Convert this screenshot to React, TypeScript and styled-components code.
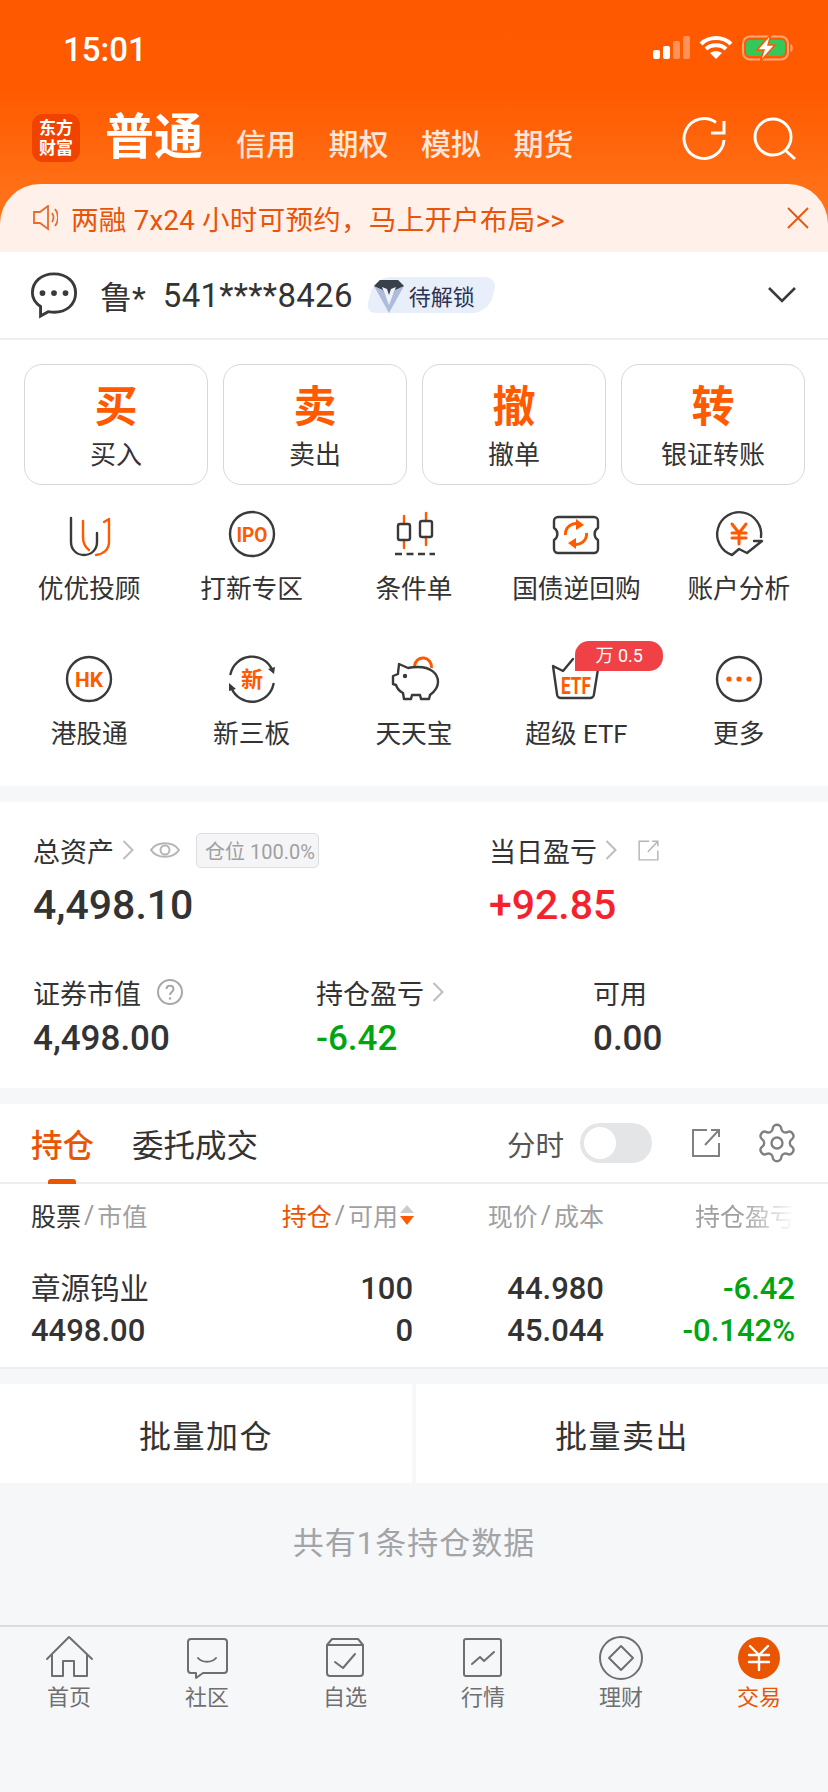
import React from "react";
import styled, { createGlobalStyle } from "styled-components";
import { Settings } from "lucide-react";

const ORANGE = "#ff5a00";
const DARK = "#333333";
const GRAY_LINE = "#eeeeee";
const PAGE_BG = "#f6f7f9";
const GREEN = "#00a510";

const GlobalStyle = createGlobalStyle`
  html, body {
    margin: 0;
    padding: 0;
    background: ${PAGE_BG};
  }
  body, button {
    font-family: Roboto, "Noto Sans CJK SC", sans-serif;
    color: ${DARK};
  }
`;

const Page = styled.div`
  width: 828px;
  height: 1792px;
  overflow: hidden;
  display: flex;
  flex-direction: column;
  background: ${PAGE_BG};
`;

/* header */
const Header = styled.header`
  height: 252px;
  display: flex;
  flex-direction: column;
  background: linear-gradient(180deg, #ff5900 0, #ff5a00 90px, #ff7a22 240px);
`;
const StatusBar = styled.div`
  height: 98px;
  display: flex;
  align-items: center;
  padding-left: 63px;
  padding-right: 34px;
`;
const Time = styled.div`
  flex: 1;
  color: #fff;
  font-size: 33px;
  font-weight: 500;
`;
const NavRow = styled.div`
  height: 86px;
  display: flex;
  align-items: flex-start;
  padding: 16px 32px 0;
  box-sizing: border-box;
`;
const Logo = styled.div`
  width: 48px;
  height: 48px;
  border-radius: 11px;
  background: #f04300;
  color: #fff;
  font-size: 17px;
  font-weight: 700;
  line-height: 20px;
  display: flex;
  align-items: center;
  justify-content: center;
  text-align: center;
  margin-right: 25px;
`;
const NavActive = styled.div`
  color: #fff;
  font-size: 49px;
  font-weight: 700;
  line-height: 48px;
  margin-right: 33px;
`;
const NavItem = styled.div`
  color: #ffe6d8;
  font-size: 30px;
  font-weight: 500;
  line-height: 30px;
  margin-top: 16px;
  margin-right: 32.5px;
`;
const NavIcons = styled.div`
  margin-left: auto;
  display: flex;
  gap: 20px;
  margin-right: -6px;
  margin-top: 2px;
`;
const Notice = styled.div`
  height: 68px;
  display: flex;
  align-items: center;
  background: #fff1ea;
  border-radius: 40px 40px 0 0;
  padding: 0 19px 0 32px;
  color: #e8540a;
  font-size: 27.5px;
`;
const NoticeText = styled.span`
  flex: 1;
  margin-left: 13px;
  letter-spacing: 0.3px;
`;

/* account row */
const AccountRow = styled.div`
  height: 88px;
  box-sizing: border-box;
  background: #fff;
  border-bottom: 2px solid ${GRAY_LINE};
  display: flex;
  align-items: center;
  padding: 0 32px 0 30px;
`;
const AccountName = styled.span`
  font-size: 32px;
  margin-left: 22px;
`;
const AccountNo = styled.span`
  font-size: 33px;
  margin-left: 17px;
  letter-spacing: 0.3px;
`;
const VipBadge = styled.div`
  position: relative;
  width: 132px;
  height: 36px;
  margin-left: 13px;
  margin-right: auto;
  display: flex;
  align-items: center;
  padding-left: 7px;
  box-sizing: border-box;
  &::before {
    content: "";
    position: absolute;
    inset: 0 5px 0 4px;
    background: #e8eefa;
    border-radius: 16px 12px 16px 10px;
    transform: skewX(-14deg);
  }
`;
const VipText = styled.span`
  position: relative;
  font-size: 22px;
  color: #2a3350;
  margin-left: 4px;
`;

/* trade buttons and shortcuts */
const TradePanel = styled.section`
  background: #fff;
  padding: 24px 24px 37px 24px;
`;
const TradeGrid = styled.div`
  display: grid;
  grid-template-columns: repeat(4, 184px);
  gap: 15px;
`;
const TradeButton = styled.div`
  height: 121px;
  box-sizing: border-box;
  border: 1.5px solid #d8d8d8;
  border-radius: 18px;
  padding-top: 6px;
  display: flex;
  flex-direction: column;
  align-items: center;
  justify-content: center;
`;
const TradeChar = styled.div`
  color: ${ORANGE};
  font-size: 43px;
  font-weight: 700;
  line-height: 50px;
`;
const TradeLabel = styled.div`
  font-size: 26px;
  line-height: 36px;
  margin-top: 5px;
`;
const ShortcutGrid = styled.div`
  display: grid;
  grid-template-columns: repeat(5, 162.4px);
  row-gap: 45px;
  margin: 19px -16px 0;
`;
const Shortcut = styled.div`
  position: relative;
  height: 100px;
  display: flex;
  flex-direction: column;
  align-items: center;
`;
const ShortcutLabel = styled.div`
  font-size: 25.7px;
  line-height: 30px;
  margin-top: 10px;
  white-space: nowrap;
`;
const RateBadge = styled.div`
  position: absolute;
  left: 80px;
  top: -8px;
  width: 88px;
  height: 30px;
  border-radius: 14px 14px 14px 0;
  background: #ef4146;
  color: #fff;
  font-size: 18px;
  line-height: 30px;
  text-align: center;
`;
const IconGlyph = styled.text<{ $size: number }>`
  fill: ${ORANGE};
  font-size: ${(p) => p.$size}px;
  font-weight: 700;
  font-family: Roboto, "Noto Sans CJK SC", sans-serif;
  text-anchor: middle;
`;

/* assets */
const AssetPanel = styled.section`
  margin-top: 16px;
  background: #fff;
  padding: 30px 33px 29px;
`;
const AssetTop = styled.div`
  display: grid;
  grid-template-columns: 456px 1fr;
`;
const AssetBottom = styled.div`
  display: grid;
  grid-template-columns: 283px 277px 1fr;
  margin-top: 44px;
`;
const AssetLabel = styled.div`
  height: 36px;
  display: flex;
  align-items: center;
  font-size: 27px;
  white-space: nowrap;
`;
const Ratio = styled.div`
  height: 35px;
  margin-left: 16px;
  padding: 0 3px 0 8px;
  display: flex;
  align-items: center;
  box-sizing: border-box;
  border: 1px solid #dddddd;
  border-radius: 5px;
  background: #f5f5f7;
  color: #a0a0a0;
  font-size: 20px;
`;
const BigValue = styled.div<{ $color?: string }>`
  color: ${(p) => p.$color || DARK};
  font-size: 41px;
  font-weight: 500;
  line-height: 50px;
  margin-top: 12px;
`;
const SmallValue = styled.div<{ $color?: string }>`
  color: ${(p) => p.$color || DARK};
  font-size: 35px;
  font-weight: 500;
  line-height: 40px;
  margin-top: 9px;
`;

/* holdings */
const TabRow = styled.div`
  margin-top: 16px;
  height: 80px;
  box-sizing: border-box;
  background: #fff;
  border-bottom: 2px solid ${GRAY_LINE};
  display: flex;
  align-items: center;
  padding: 0 29px 0 31px;
`;
const Tab = styled.div<{ $active?: boolean }>`
  position: relative;
  align-self: stretch;
  display: flex;
  align-items: center;
  margin-right: 38px;
  font-size: 31.5px;
  color: ${(p) => (p.$active ? "#ea5504" : DARK)};
  font-weight: ${(p) => (p.$active ? 500 : 400)};
  ${(p) =>
    p.$active &&
    `&::after {
      content: "";
      position: absolute;
      left: 17px;
      bottom: -2px;
      width: 28px;
      height: 5px;
      border-radius: 3px 3px 0 0;
      background: #ea5504;
    }`}
`;
const TabTools = styled.div`
  margin-left: auto;
  display: flex;
  align-items: center;
`;
const ToolLabel = styled.span`
  font-size: 28.5px;
  color: #555;
`;
const Toggle = styled.div`
  width: 72px;
  height: 40px;
  margin: 0 38px 0 16px;
  border-radius: 20px;
  background: #e4e5e7;
  padding: 4px;
  box-sizing: border-box;
  &::before {
    content: "";
    display: block;
    width: 32px;
    height: 32px;
    border-radius: 50%;
    background: #fff;
  }
`;
const GearIcon = styled(Settings)`
  width: 44px;
  height: 44px;
  margin-left: 33px;
  color: #808080;
  stroke-width: 1.3;
`;
const TableGrid = styled.div`
  display: grid;
  grid-template-columns: 160px 222px 191px 191px;
  padding: 0 33px 0 31px;
  background: #fff;
`;
const HeadRow = styled(TableGrid)`
  height: 66px;
  box-sizing: border-box;
  padding-bottom: 4px;
  align-items: center;
  font-size: 25px;
  color: #a0a0a0;
`;
const BodyRow = styled(TableGrid)`
  padding-top: 18px;
  padding-bottom: 15px;
  border-bottom: 2px solid ${GRAY_LINE};
  font-size: 31px;
  line-height: 42px;
`;
const HeadCell = styled.div<{ $fade?: boolean }>`
  display: flex;
  justify-content: flex-end;
  align-items: center;
  white-space: nowrap;
  ${(p) =>
    p.$fade &&
    `-webkit-mask-image: linear-gradient(90deg, #000 72%, transparent 100%);
     mask-image: linear-gradient(90deg, #000 72%, transparent 100%);`}
`;
const HeadFirst = styled(HeadCell)`
  justify-content: flex-start;
`;
const HeadStrong = styled.span<{ $orange?: boolean }>`
  color: ${(p) => (p.$orange ? "#ea5504" : "inherit")};
`;
const HeadDark = styled.span`
  color: ${DARK};
`;
const Slash = styled.span`
  margin: 0 3px;
  color: #999;
`;
const SortIcon = styled.svg`
  width: 16px;
  height: 24px;
  margin-left: 1px;
  margin-right: -2px;
`;
const Cell = styled.div`
  text-align: right;
  font-weight: 500;
`;
const NameCell = styled.div`
  font-weight: 400;
`;
const NameText = styled.div`
  font-size: 29.5px;
  white-space: nowrap;
`;
const NameNumber = styled.div`
  font-weight: 500;
`;
const Line = styled.div<{ $color?: string }>`
  color: ${(p) => p.$color || DARK};
  white-space: nowrap;
`;
const BatchRow = styled.div`
  margin-top: 15px;
  display: flex;
  gap: 4px;
`;
const BatchButton = styled.div`
  flex: 1;
  height: 99px;
  background: #fff;
  display: flex;
  align-items: center;
  justify-content: center;
  font-size: 32px;
  letter-spacing: 1.5px;
`;
const Summary = styled.div`
  height: 142px;
  box-sizing: border-box;
  padding-top: 41px;
  text-align: center;
  color: #a2a4a8;
  font-size: 31px;
  line-height: 40px;
  letter-spacing: 1px;
`;

/* bottom bar */
const BottomBar = styled.nav`
  flex: 1;
  border-top: 2px solid #dcdcdc;
  display: grid;
  grid-template-columns: repeat(6, 138px);
  padding-top: 7px;
  align-items: start;
`;
const BarItem = styled.div<{ $active?: boolean }>`
  display: flex;
  flex-direction: column;
  align-items: center;
  font-size: 22px;
  line-height: 26px;
  color: ${(p) => (p.$active ? "#ea5504" : "#6f6f72")};
`;
const BarIcon = styled.svg`
  width: 50px;
  height: 48px;
  margin-bottom: 3px;
  fill: none;
  stroke: #6f6f72;
  stroke-width: 2;
  stroke-linejoin: round;
  stroke-linecap: round;
`;
const StatusIcon = styled.svg`
  display: block;
  overflow: visible;
`;
const LineIcon = styled.svg<{ $size: number }>`
  display: block;
  flex: none;
  width: ${(p) => p.$size}px;
  height: ${(p) => p.$size}px;
  fill: none;
`;
const Shortcut60 = styled.svg`
  display: block;
  width: 60px;
  height: 60px;
  fill: none;
  overflow: visible;
  stroke-width: 2.4;
  stroke-linecap: round;
  stroke-linejoin: round;
`;
const Chevron = styled.svg`
  width: 12px;
  height: 22px;
  margin-left: 8px;
  fill: none;
  stroke: #bdbdbd;
  stroke-width: 2;
`;

const INK = "#3a3a3a";

const SmallChevron = () => (
  <Chevron viewBox="0 0 12 22">
    <path d="M1.5 2 L10.5 11 L1.5 20" />
  </Chevron>
);

const ShareIcon = ({ size, color, ml }: { size: number; color: string; ml: number }) => (
  <LineIcon $size={size} viewBox="0 0 32 32" style={{ marginLeft: ml }} stroke={color} strokeWidth={2}>
    <path d="M17 3 H3 V29 H29 V16" />
    <path d="M15 18 L29 3 M21 3 H29 V10" />
  </LineIcon>
);

const shortcuts: { label: string; icon: React.ReactNode; badge?: string }[] = [
  {
    label: "优优投顾",
    icon: (
      <>
        <path stroke={INK} d="M12 14 V38 C12 46 18 51 25 51 C32 51 38 46 38 38 V29" />
        <path stroke={ORANGE} d="M24 17 V33 C24 39 26 43 30 46" />
        <path stroke={ORANGE} d="M37 51 C45 50 50 45 50 38 V15 L45 18" />
      </>
    ),
  },
  {
    label: "打新专区",
    icon: (
      <>
        <circle cx="30" cy="30" r="22" stroke={INK} />
        <IconGlyph $size={21} x="30" y="37.5" textLength="31" lengthAdjust="spacingAndGlyphs">
          IPO
        </IconGlyph>
      </>
    ),
  },
  {
    label: "条件单",
    icon: (
      <>
        <path stroke={ORANGE} d="M20 12 V20 M20 36 V44 M42 9 V17 M42 33 V41" />
        <rect x="14" y="20" width="12" height="16" rx="2" stroke={INK} />
        <rect x="36" y="17" width="12" height="16" rx="2" stroke={INK} />
        <path stroke={INK} d="M11 50 H51" strokeDasharray="7 4.5" strokeLinecap="butt" />
      </>
    ),
  },
  {
    label: "国债逆回购",
    icon: (
      <>
        <path
          stroke={INK}
          d="M12 13 H48 A4 4 0 0 1 52 17 V24 A7 7 0 0 0 52 36 V45 A4 4 0 0 1 48 49 H12 A4 4 0 0 1 8 45 V36 A7 7 0 0 0 8 24 V17 A4 4 0 0 1 12 13 Z"
        />
        <path stroke={ORANGE} strokeWidth={3} strokeLinecap="butt" d="M19.5 31 A10.5 10.5 0 0 1 33 20" />
        <path stroke={ORANGE} strokeWidth={3} strokeLinecap="butt" d="M40.5 29 A10.5 10.5 0 0 1 27 40" />
        <path fill={ORANGE} d="M30 15 L38 21 L30 26 Z M30 45 L22 39 L30 34 Z" />
      </>
    ),
  },
  {
    label: "账户分析",
    icon: (
      <>
        <path stroke={INK} d="M52 33 A22 22 0 1 0 23 51 L30 45 L38 49 L53 37 H45" />
        <path stroke={ORANGE} strokeWidth={3} d="M23 20 L30 29 L37 20 M30 29 V40 M23 29 H37 M23 34 H37" />
      </>
    ),
  },
  {
    label: "港股通",
    icon: (
      <>
        <circle cx="30" cy="30" r="22" stroke={INK} />
        <IconGlyph $size={21} x="30" y="37.5" textLength="28" lengthAdjust="spacingAndGlyphs">
          HK
        </IconGlyph>
      </>
    ),
  },
  {
    label: "新三板",
    icon: (
      <>
        <path stroke={INK} d="M8.5 25 A22 22 0 0 1 50 20.5 M51.5 35 A22 22 0 0 1 9.5 39" />
        <path fill={INK} d="M46 20 L53 18 L52 25 Z M14 40 L7 42 L7 34 Z" />
        <IconGlyph $size={22} x="30" y="38">
          新
        </IconGlyph>
      </>
    ),
  },
  {
    label: "天天宝",
    icon: (
      <>
        <path stroke={ORANGE} strokeWidth={3} strokeLinecap="butt" d="M30.5 17 A8.5 9 0 0 1 47.5 19" />
        <path
          stroke={INK}
          d="M15 15 L24 19 C28 18 31 18 34 18 C46 18 54 24 54 33 C54 39 50 43 46 46 L45 50 H37 L36 46 H28 L27 50 H20 L19 44 C15 42 13 39 12 36 L9 35 V27 L14 25 C14 21 15 18 15 15 Z"
        />
        <circle cx="21" cy="27" r="2.2" fill={INK} />
      </>
    ),
  },
  {
    label: "超级 ETF",
    badge: "万 0.5",
    icon: (
      <>
        <path stroke={INK} d="M7 17 L17 22 L27 10 M7 17 L11 45 A4 4 0 0 0 15 49 H44 A4 4 0 0 0 48 45 L52 20" />
        <IconGlyph $size={23} x="30" y="45" textLength="30" lengthAdjust="spacingAndGlyphs">
          ETF
        </IconGlyph>
      </>
    ),
  },
  {
    label: "更多",
    icon: (
      <>
        <circle cx="30" cy="30" r="22" stroke={INK} />
        <circle cx="20" cy="30" r="2.6" fill={ORANGE} />
        <circle cx="30" cy="30" r="2.6" fill={ORANGE} />
        <circle cx="40" cy="30" r="2.6" fill={ORANGE} />
      </>
    ),
  },
];

const trades = [
  { char: "买", label: "买入" },
  { char: "卖", label: "卖出" },
  { char: "撤", label: "撤单" },
  { char: "转", label: "银证转账" },
];

const barItems: { label: string; active?: boolean; icon: React.ReactNode }[] = [
  {
    label: "首页",
    icon: <path d="M3 25 L25 3 L48 25 M8 20 V42 H19 V27 H30 V42 H43 V20" />,
  },
  {
    label: "社区",
    icon: (
      <>
        <path d="M9 5 H42 A3 3 0 0 1 45 8 V36 A3 3 0 0 1 42 39 H21 L14 44 V39 H9 A3 3 0 0 1 6 36 V8 A3 3 0 0 1 9 5 Z" />
        <path d="M16 24 C20 29 30 29 34 24" />
      </>
    ),
  },
  {
    label: "自选",
    icon: (
      <>
        <path d="M7 11 L12 5 H38 L43 11 V39 A3 3 0 0 1 40 42 H10 A3 3 0 0 1 7 39 Z M7 11 H43" />
        <path d="M15 28 L23 34 L35 20" />
      </>
    ),
  },
  {
    label: "行情",
    icon: (
      <>
        <rect x="6" y="5" width="37" height="37" rx="2" />
        <path d="M14 30 L22 23 L26 27 L36 18" />
      </>
    ),
  },
  {
    label: "理财",
    icon: (
      <>
        <circle cx="25" cy="24" r="21" />
        <path d="M25 12 L37 24 L25 36 L13 24 Z" />
      </>
    ),
  },
  {
    label: "交易",
    active: true,
    icon: (
      <>
        <circle cx="25" cy="24" r="21" fill="#ea5504" stroke="none" />
        <path stroke="#fff" d="M16 12 L25 21 L34 12 M25 21 V36 M15 21 H35 M15 28 H35" strokeWidth={2.4} />
      </>
    ),
  },
];

export default function App() {
  return (
    <Page>
      <GlobalStyle />
      <Header>
        <StatusBar>
          <Time>15:01</Time>
          <StatusIcon width="142" height="26" viewBox="0 0 142 26">
            <g fill="#fff">
              <rect x="1" y="14" width="7" height="9" rx="2" />
              <rect x="11" y="10" width="7" height="13" rx="2" />
              <rect x="21" y="5" width="7" height="18" rx="2" opacity="0.35" />
              <rect x="31" y="0" width="7" height="23" rx="2" opacity="0.35" />
            </g>
            <path
              fill="none"
              stroke="#fff"
              strokeWidth="4"
              d="M49 8 C57 0 71 0 79 8 M54 13 C59 8 69 8 74 13"
            />
            <path fill="#fff" d="M64 23 L58 17 C61 14.5 67 14.5 70 17 Z" />
            <rect x="91" y="0.5" width="45" height="23" rx="7" fill="none" stroke="#ffa679" strokeWidth="2" />
            <rect x="94" y="4" width="39" height="16" rx="4" fill="#34c759" />
            <path fill="#ffa679" d="M138.5 8 C141.5 9 141.5 15 138.5 16 Z" />
            <path
              fill="#fff"
              stroke={ORANGE}
              strokeWidth="1.5"
              d="M119 -2 L105 14 H112 L108 26 L123 9 H116 Z"
            />
          </StatusIcon>
        </StatusBar>
        <NavRow>
          <Logo>
            东方
            <br />
            财富
          </Logo>
          <NavActive>普通</NavActive>
          <NavItem>信用</NavItem>
          <NavItem>期权</NavItem>
          <NavItem>模拟</NavItem>
          <NavItem>期货</NavItem>
          <NavIcons>
            <LineIcon $size={50} viewBox="0 0 50 50" stroke="#fff" strokeWidth={3}>
              <path d="M42 24 A20 20 0 1 1 34 6.5" />
              <path d="M29 17 H42 V5" />
            </LineIcon>
            <LineIcon $size={50} viewBox="0 0 50 50" stroke="#fff" strokeWidth={3}>
              <circle cx="21" cy="21" r="18" />
              <path d="M33 34 L43 43" />
            </LineIcon>
          </NavIcons>
        </NavRow>
        <Notice>
          <LineIcon $size={26} viewBox="0 0 26 26" stroke="#ea6a2c" strokeWidth={1.8}>
            <path d="M2 7 H8 L16 1 V24 L8 18 H2 Z" />
            <path d="M20 8 C22 11 22 14 20 17 M23 4 C27 9 27 16 23 21" />
          </LineIcon>
          <NoticeText>两融 7x24 小时可预约，马上开户布局&gt;&gt;</NoticeText>
          <LineIcon $size={22} viewBox="0 0 22 22" stroke="#e8540a" strokeWidth={1.8}>
            <path d="M1 1 L21 21 M21 1 L1 21" />
          </LineIcon>
        </Notice>
      </Header>

      <AccountRow>
        <LineIcon $size={48} viewBox="0 0 48 50" stroke={INK} strokeWidth={3}>
          <path d="M10 47 V37 C4 33 1.5 28 1.5 23 C1.5 11 11 3 24 3 C37 3 46.5 11 46.5 23 C46.5 35 37 43 24 43 C21 43 19 42.5 18 42.5 Z" />
          <circle cx="12" cy="23" r="3" fill={INK} stroke="none" />
          <circle cx="24" cy="23" r="3" fill={INK} stroke="none" />
          <circle cx="36" cy="23" r="3" fill={INK} stroke="none" />
        </LineIcon>
        <AccountName>鲁*</AccountName>
        <AccountNo>541****8426</AccountNo>
        <VipBadge>
          <StatusIcon width="32" height="36" viewBox="0 0 32 36" style={{ position: "relative" }}>
            <path fill="#aebcdc" d="M1 9 L16 36 L31 9 L25 3 H7 Z" />
            <path fill="#3a3f4c" d="M7 3 H25 L31 9 L22 13 L16 26 L10 13 L1 9 Z" />
            <path fill="#eef2fb" d="M9 10 L16 28 L23 10 L18 12 L16 18 L14 12 Z" />
          </StatusIcon>
          <VipText>待解锁</VipText>
        </VipBadge>
        <LineIcon $size={28} viewBox="0 0 28 28" stroke={INK} strokeWidth={2.6}>
          <path d="M1 7 L14 20 L27 7" />
        </LineIcon>
      </AccountRow>

      <TradePanel>
        <TradeGrid>
          {trades.map((t) => (
            <TradeButton key={t.char}>
              <TradeChar>{t.char}</TradeChar>
              <TradeLabel>{t.label}</TradeLabel>
            </TradeButton>
          ))}
        </TradeGrid>
        <ShortcutGrid>
          {shortcuts.map((s) => (
            <Shortcut key={s.label}>
              <Shortcut60 viewBox="0 0 60 60">{s.icon}</Shortcut60>
              <ShortcutLabel>{s.label}</ShortcutLabel>
              {s.badge && <RateBadge>{s.badge}</RateBadge>}
            </Shortcut>
          ))}
        </ShortcutGrid>
      </TradePanel>

      <AssetPanel>
        <AssetTop>
          <div>
            <AssetLabel>
              总资产
              <SmallChevron />
              <LineIcon $size={30} viewBox="0 0 30 30" stroke="#b5b5b5" strokeWidth={2} style={{ marginLeft: 16 }}>
                <path d="M1 15 C7 6 23 6 29 15 C23 24 7 24 1 15 Z" />
                <circle cx="15" cy="15" r="4.5" />
              </LineIcon>
              <Ratio>仓位 100.0%</Ratio>
            </AssetLabel>
            <BigValue>4,498.10</BigValue>
          </div>
          <div>
            <AssetLabel>
              当日盈亏
              <SmallChevron />
              <ShareIcon size={23} color="#b5b5b5" ml={20} />
            </AssetLabel>
            <BigValue $color="#f5222d">+92.85</BigValue>
          </div>
        </AssetTop>
        <AssetBottom>
          <div>
            <AssetLabel>
              证券市值
              <LineIcon $size={26} viewBox="0 0 26 26" stroke="#a8a8a8" strokeWidth={2} style={{ marginLeft: 16 }}>
                <circle cx="13" cy="13" r="12" />
                <path d="M9.5 10 C9.5 5.5 16.5 5.5 16.5 10 C16.5 13 13 13 13 16" />
                <circle cx="13" cy="19.5" r="1.2" fill="#a8a8a8" stroke="none" />
              </LineIcon>
            </AssetLabel>
            <SmallValue>4,498.00</SmallValue>
          </div>
          <div>
            <AssetLabel>
              持仓盈亏
              <SmallChevron />
            </AssetLabel>
            <SmallValue $color={GREEN}>-6.42</SmallValue>
          </div>
          <div>
            <AssetLabel>可用</AssetLabel>
            <SmallValue>0.00</SmallValue>
          </div>
        </AssetBottom>
      </AssetPanel>

      <TabRow>
        <Tab $active>持仓</Tab>
        <Tab>委托成交</Tab>
        <TabTools>
          <ToolLabel>分时</ToolLabel>
          <Toggle />
          <ShareIcon size={32} color="#808080" ml={0} />
          <GearIcon />
        </TabTools>
      </TabRow>

      <HeadRow>
        <HeadFirst>
          <HeadDark>股票</HeadDark>
          <Slash>/</Slash>
          市值
        </HeadFirst>
        <HeadCell>
          <HeadStrong $orange>持仓</HeadStrong>
          <Slash>/</Slash>
          可用
          <SortIcon viewBox="0 0 16 24">
            <path fill="#cccccc" d="M8 2 L15 10 H1 Z" />
            <path fill={ORANGE} d="M1 13 H15 L8 22 Z" />
          </SortIcon>
        </HeadCell>
        <HeadCell>
          现价
          <Slash>/</Slash>
          成本
        </HeadCell>
        <HeadCell $fade>持仓盈亏</HeadCell>
      </HeadRow>
      <BodyRow>
        <NameCell>
          <NameText>章源钨业</NameText>
          <NameNumber>4498.00</NameNumber>
        </NameCell>
        <Cell>
          <Line>100</Line>
          <Line>0</Line>
        </Cell>
        <Cell>
          <Line>44.980</Line>
          <Line>45.044</Line>
        </Cell>
        <Cell>
          <Line $color={GREEN}>-6.42</Line>
          <Line $color={GREEN}>-0.142%</Line>
        </Cell>
      </BodyRow>

      <BatchRow>
        <BatchButton>批量加仓</BatchButton>
        <BatchButton>批量卖出</BatchButton>
      </BatchRow>
      <Summary>共有1条持仓数据</Summary>

      <BottomBar>
        {barItems.map((b) => (
          <BarItem key={b.label} $active={b.active}>
            <BarIcon viewBox="0 0 50 48">{b.icon}</BarIcon>
            {b.label}
          </BarItem>
        ))}
      </BottomBar>
    </Page>
  );
}
